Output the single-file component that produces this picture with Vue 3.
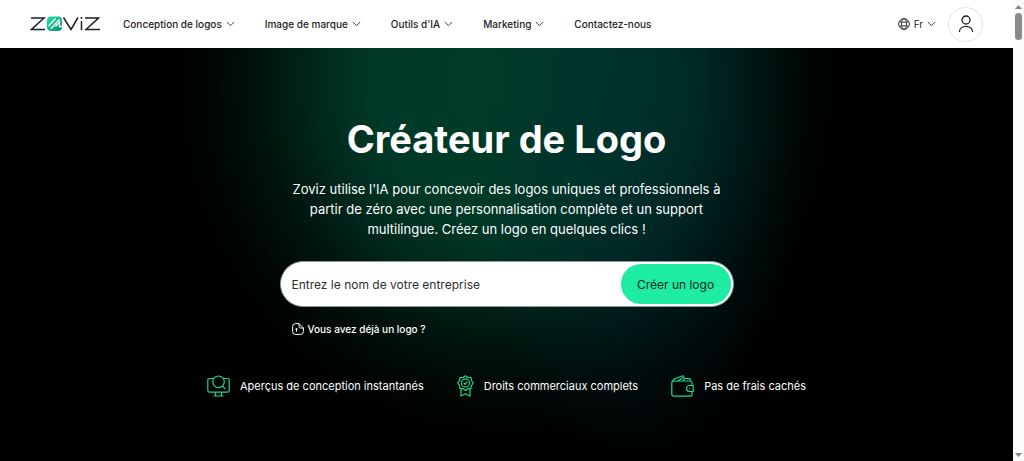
<script setup>
import { ref } from 'vue'

const menus = ['Conception de logos', 'Image de marque', "Outils d'IA", 'Marketing']
const company = ref('')
</script>

<template>
  <div class="shell">
    <div class="page">
      <header class="topbar">
        <a class="logo" href="#" aria-label="Zoviz">
          <svg width="70" height="16" viewBox="0 0 70 16" fill="none">
            <defs>
              <linearGradient id="mark" x1="0" y1="0" x2="1" y2="1">
                <stop offset="0" stop-color="#1fe3a0" />
                <stop offset="1" stop-color="#0b8f78" />
              </linearGradient>
            </defs>
            <path d="M1 2H14L1.500 13.500H15" stroke="#1d2124" stroke-width="1.500" />
            <rect x="17" y="0.500" width="15" height="14.500" rx="4" fill="url(#mark)" />
            <path d="M18.500 10L25.500 2.500M21 12.500L29.500 3.200M25.500 10.500L29.500 6V10.500H32" stroke="#fff" stroke-width="1.300" />
            <path d="M33.500 1.500L41 13.500L48 1.500" stroke="#1d2124" stroke-width="1.500" />
            <path d="M51.500 5V14.200M51.500 1V3M55 2H68.500L56 13.500H70" stroke="#1d2124" stroke-width="1.500" />
          </svg>
        </a>
        <nav class="menu" aria-label="Navigation">
          <button v-for="label in menus" :key="label" type="button" class="item">
            {{ label }}
            <svg class="chev" width="9" height="6" viewBox="0 0 9 6"><path d="M.8 1L4.500 4.700L8.200 1" /></svg>
          </button>
          <a class="item" href="#">Contactez-nous</a>
        </nav>
        <button type="button" class="item lang">
          <svg width="12" height="12" viewBox="0 0 12 12" fill="none" stroke="#1d2124" stroke-width=".9">
            <circle cx="6" cy="6" r="5.400" />
            <ellipse cx="6" cy="6" rx="2.600" ry="5.400" />
            <path d="M1.200 4H10.800M1.200 8H10.800" />
          </svg>
          Fr
          <svg class="chev" width="9" height="6" viewBox="0 0 9 6"><path d="M.8 1L4.500 4.700L8.200 1" /></svg>
        </button>
        <button type="button" class="user" aria-label="Compte">
          <svg width="16" height="18" viewBox="0 0 16 18" fill="none" stroke="#1d2124" stroke-width="1.300">
            <circle cx="8" cy="5" r="4" />
            <path d="M1.400 17C1.400 9.500 14.600 9.500 14.600 17" />
          </svg>
        </button>
      </header>

      <main class="hero">
        <h1>Créateur de Logo</h1>
        <p class="lead">
          Zoviz utilise l'IA pour concevoir des logos uniques et professionnels à partir de zéro avec une
          personnalisation complète et un support multilingue. Créez un logo en quelques clics !
        </p>
        <form class="maker" @submit.prevent>
          <div class="field">
            <input v-model="company" type="text" placeholder="Entrez le nom de votre entreprise" aria-label="Nom de votre entreprise" />
            <button type="submit">Créer un logo</button>
          </div>
          <a class="have" href="#">
            <svg width="12" height="12" viewBox="0 0 12 12" fill="none" stroke="#fff" stroke-width="1" stroke-linejoin="round">
              <path d="M7 .6H3.500Q.6 .6 .6 3.500V8.500Q.6 11.400 3.500 11.400H8.500Q11.400 11.400 11.400 8.500V5L7 .6V3.500Q7 5 8.500 5H11.400" />
              <path d="M4.500 8.800V5.300M3.200 6.500L4.500 5.200L5.800 6.500" />
            </svg>
            Vous avez déjà un logo ?
          </a>
        </form>
        <ul class="perks">
          <li>
            <svg width="23" height="22" viewBox="0 0 23 22">
              <path d="M6 3.500H2.500Q.8 3.500 .8 5.200V15.500Q.8 17.200 2.500 17.200H20.500Q22.200 17.200 22.200 15.500V5.200Q22.200 3.500 20.500 3.500H17" />
              <path d="M8.500 17.200V20.500M14.500 17.200V20.500M6.500 21H16.500" />
              <circle cx="11.500" cy="6.800" r="5.800" />
              <path d="M15.500 11L18.500 14.200" />
            </svg>
            Aperçus de conception instantanés
          </li>
          <li>
            <svg width="17" height="22" viewBox="0 0 17 22">
              <path d="M8.500 .8L11 2.500L14 2.500L14.500 5.500L16.300 8L14.500 10.500L14 13.500L11 13.700L8.500 15.400L6 13.700L3 13.500L2.500 10.500L.7 8L2.500 5.500L3 2.500L6 2.500Z" />
              <circle cx="8.500" cy="8" r="4.100" />
              <path d="M6.700 8L8 9.300L10.500 6.700M4 14V21L8.500 18.700L13 21V14" />
            </svg>
            Droits commerciaux complets
          </li>
          <li>
            <svg width="23" height="22" viewBox="0 0 23 22">
              <path d="M21 10.500V7.500Q21 6 19.500 6H3Q.8 6 .8 8V19Q.8 21.200 3 21.200H19.500Q21 21.200 21 19.500V16.500" />
              <path d="M22.200 10.500H18.500A3 3 0 0 0 18.500 16.500H22.200ZM18.300 13.500H19" />
              <path d="M1.500 6.500Q2.500 3.700 5 3.300L12 .8L13.500 3.500M7 6L12 2.500M12 6L13.500 3.500H19V6" />
            </svg>
            Pas de frais cachés
          </li>
        </ul>
      </main>
    </div>
    <div class="scroll" aria-hidden="true">
      <svg width="7" height="4" viewBox="0 0 7 4"><path d="M0 4L3.500 0L7 4Z" /></svg>
      <span class="thumb"></span>
      <svg width="7" height="4" viewBox="0 0 7 4"><path d="M0 0L3.500 4L7 0Z" /></svg>
    </div>
  </div>
</template>

<style>
body {
  background: #000;
}
</style>

<style scoped>
.shell {
  display: flex;
  min-height: 100vh;
  font-family: Inter, "Liberation Sans", sans-serif;
  color: #1d2124;
}
.page {
  flex: 1;
  display: flex;
  flex-direction: column;
}
button,
input {
  font: inherit;
  color: inherit;
  border: 0;
  padding: 0;
  background: none;
}
a {
  color: inherit;
  text-decoration: none;
}
.topbar {
  display: flex;
  align-items: center;
  height: 48px;
  box-sizing: border-box;
  padding: 0 30px;
  background: #fff;
}
.logo {
  display: flex;
  margin-right: 23px;
}
.menu {
  display: flex;
  gap: 30px;
  flex: 1;
}
.item {
  display: flex;
  align-items: center;
  gap: 4px;
  font-size: 10px;
  line-height: 16px;
  font-weight: 500;
  white-space: nowrap;
}
.chev {
  fill: none;
  stroke: #3a3f42;
  stroke-width: 1;
}
.lang {
  font-weight: 400;
  margin-right: 12px;
}
.user {
  display: flex;
  align-items: center;
  justify-content: center;
  width: 35px;
  height: 35px;
  border: 1px solid #e4e4e4;
  border-radius: 50%;
}
.hero {
  flex: 1;
  display: flex;
  flex-direction: column;
  align-items: center;
  padding: 67px 20px 50px;
  color: #fff;
  background:
    radial-gradient(ellipse 16% 80% at 63% 24%, rgba(0, 42, 48, 0.6) 0%, rgba(0, 42, 48, 0.35) 45%, transparent 100%),
    radial-gradient(ellipse 34% 90% at 50% 8%, #003d29 0%, #003927 38%, #002a1e 54%, #001510 70%, #000604 86%, #000 100%),
    #000;
}
h1 {
  margin: 0;
  font-size: 38px;
  line-height: 48px;
  font-weight: 700;
}
.lead {
  margin: 16px 0 0;
  max-width: 440px;
  text-align: center;
  font-size: 13px;
  line-height: 20px;
}
.maker {
  width: 100%;
  max-width: 454px;
  margin-top: 22px;
}
.field {
  display: flex;
  height: 46px;
  box-sizing: border-box;
  padding: 2px;
  border: 1px solid #8a9a95;
  border-radius: 23px;
  background: #fff;
}
.field input {
  flex: 1;
  min-width: 0;
  padding: 0 9px;
  outline: 0;
  font-size: 12px;
  color: #1d2124;
}
.field input::placeholder {
  color: #2b2f31;
  opacity: 1;
}
.field button {
  width: 110px;
  border-radius: 20px;
  background: #1eeca3;
  color: #08281d;
  font-size: 12px;
}
.have {
  display: inline-flex;
  align-items: center;
  gap: 4px;
  margin: 14px 0 0 12px;
  font-size: 10px;
  line-height: 16px;
  font-weight: 500;
}
.perks {
  display: flex;
  justify-content: center;
  gap: 33px;
  margin: 35px 0 0;
  padding: 0;
  list-style: none;
  font-size: 11px;
  line-height: 24px;
}
.perks li {
  display: flex;
  align-items: center;
  gap: 10px;
  white-space: nowrap;
}
.perks svg {
  fill: none;
  stroke: #1fd88f;
  stroke-width: 1.2;
  stroke-linejoin: round;
}
.scroll {
  display: flex;
  flex-direction: column;
  align-items: center;
  width: 11px;
  box-sizing: border-box;
  padding: 5px 0 4px;
  background: #fbfbfb;
}
.scroll svg {
  fill: #858585;
}
.thumb {
  width: 7px;
  height: 27px;
  margin: 4px 0 auto;
  border-radius: 4px;
  background: #8a8a8a;
}
</style>
